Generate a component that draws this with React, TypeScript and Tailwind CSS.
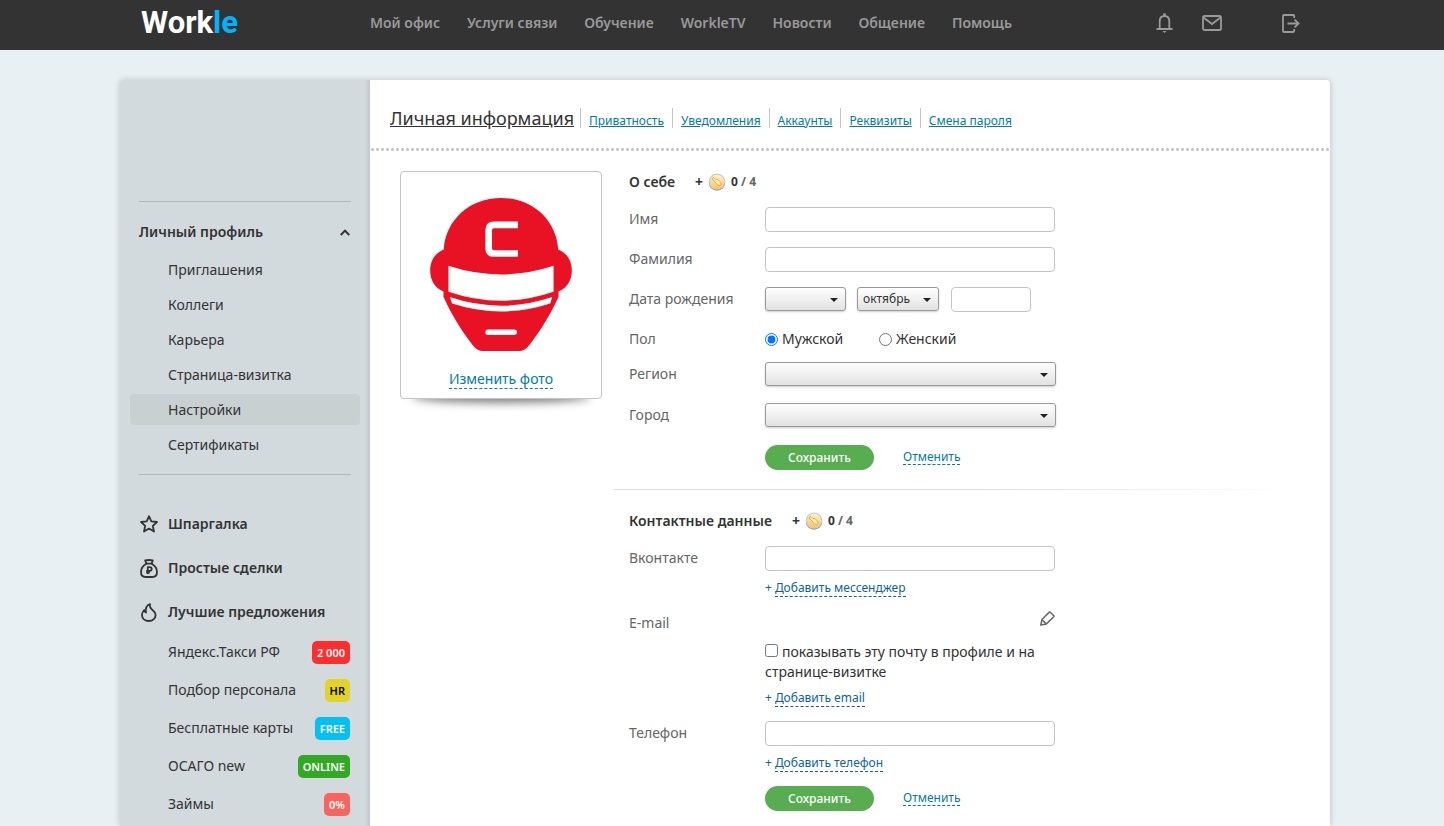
import { useState } from "react";
import type { ReactNode } from "react";
import { clsx } from "clsx";

const NAV_ITEMS = ["Мой офис", "Услуги связи", "Обучение", "WorkleTV", "Новости", "Общение", "Помощь"];

const PROFILE_ITEMS = ["Приглашения", "Коллеги", "Карьера", "Страница-визитка", "Настройки", "Сертификаты"];

const OFFERS = [
  { label: "Яндекс.Такси РФ", badge: "2 000", badgeClass: "bg-[#ff2d2d] text-white" },
  { label: "Подбор персонала", badge: "HR", badgeClass: "bg-[#e1d424] text-black" },
  { label: "Бесплатные карты", badge: "FREE", badgeClass: "bg-[#04c1f2] text-white" },
  { label: "ОСАГО new", badge: "ONLINE", badgeClass: "bg-[#31a922] text-white" },
  { label: "Займы", badge: "0%", badgeClass: "bg-[#f9655d] text-white" },
];

const TABS = ["Приватность", "Уведомления", "Аккаунты", "Реквизиты", "Смена пароля"];

const MONTHS = [
  "январь", "февраль", "март", "апрель", "май", "июнь",
  "июль", "август", "сентябрь", "октябрь", "ноябрь", "декабрь",
];

function BellIcon() {
  return (
    <svg width="17" height="20" viewBox="0 0 17 20" fill="none" stroke="currentColor" strokeWidth="1.8">
      <path d="M.5 16H16.5M3.7 16V8.5C3.7 5 5.7 3 8.5 3S13.3 5 13.3 8.5V16" />
      <path d="M8.5 .3V3" strokeWidth="2.6" />
      <path d="M6.5 18H10.5L8.5 20Z" fill="currentColor" stroke="none" />
    </svg>
  );
}

function MailIcon() {
  return (
    <svg width="20" height="16" viewBox="0 0 20 16" fill="none" stroke="currentColor" strokeWidth="1.8">
      <rect x="1" y="1" width="18" height="14" rx="1.6" />
      <path d="M1.5 2.5 10 9 18.5 2.5" />
    </svg>
  );
}

function LogoutIcon() {
  return (
    <svg width="18" height="19" viewBox="0 0 18 19" fill="none" stroke="currentColor" strokeWidth="1.8">
      <path d="M12.2 4V1.9Q12.2 1 11.3 1H2Q1 1 1 2V17Q1 18 2 18H11.3Q12.2 18 12.2 17.1V15" />
      <path d="M5.5 9.5H16.5M12.6 5.6 16.6 9.5 12.6 13.4" />
    </svg>
  );
}

function StarIcon() {
  return (
    <svg width="18" height="18" viewBox="0 0 18 18" fill="none" stroke="currentColor" strokeWidth="1.8" strokeLinejoin="round">
      <path d="M9 1.2 11.3 6.4 17 7 12.8 10.8 14 16.6 9 13.6 4 16.6 5.2 10.8 1 7 6.7 6.4Z" />
    </svg>
  );
}

function MoneyBagIcon() {
  return (
    <svg width="18" height="19" viewBox="0 0 18 19" fill="none" stroke="currentColor" strokeWidth="1.8" strokeLinejoin="round">
      <path d="M5.2 1.4Q9 .6 12.8 1.4L11.6 4.6H6.4Z" />
      <path d="M6.4 4.8C3.4 6.4 1 9.4 1 13 1 16.3 3 18 5.6 18H12.4C15 18 17 16.3 17 13 17 9.4 14.6 6.4 11.6 4.8" />
      <path d="M7.8 15V8.2H9.8A1.8 1.8 0 0 1 9.8 11.9H6.2M6.2 13.6H9.8" />
    </svg>
  );
}

function FlameIcon() {
  return (
    <svg width="16" height="19" viewBox="0 0 16 19" fill="none" stroke="currentColor" strokeWidth="1.8" strokeLinejoin="round">
      <path d="M9 1C6 2 4.4 5 5 9.5 4 9 3.2 8 3.2 7 1.8 8.5 1 10 1 12 1 15.6 4 18 7.8 18S14.600 15.5 14.6 12C14.6 10 13.6 8.600 11.8 7.2 9.6 5.400 8.200 3.800 9 1Z" />
    </svg>
  );
}

function PencilIcon() {
  return (
    <svg width="15" height="15" viewBox="0 0 15 15" fill="none" stroke="currentColor" strokeWidth="1.5" strokeLinejoin="round">
      <path d="M.8 14 2 8.5 9.3 1.1Q9.8 .7 10.3 1.2L13.8 4.7Q14.2 5.2 13.8 5.7L6.4 12.9Z" />
      <path d="M2 8.8 6.2 12.9" />
    </svg>
  );
}

function CoinIcon() {
  return (
    <svg width="18" height="18" viewBox="0 0 18 18" fill="none">
      <defs>
        <linearGradient id="coin" x1="0" y1="0" x2="0" y2="1">
          <stop offset="0" stopColor="#fff3d0" />
          <stop offset="1" stopColor="#fcc551" />
        </linearGradient>
      </defs>
      <circle cx="9" cy="9.5" r="8.2" fill="#8b8f96" />
      <circle cx="9" cy="8.6" r="8.2" fill="#c9cdd4" />
      <circle cx="9" cy="8.8" r="7" fill="url(#coin)" />
      <path
        d="M4 6.2Q4.2 4.6 6 4.6L8 6.6 9.8 6.6 12.6 9.2 13.2 11.4 11.6 12.6 9.6 11.8 7.6 10.2 6.8 8.6Z"
        fill="#ffeebd"
        stroke="#d79a2c"
        strokeWidth=".8"
      />
    </svg>
  );
}

function Helmet() {
  return (
    <svg width="142" height="153" viewBox="120 113 426 460" aria-hidden="true">
      <path
        fill="#e81224"
        d="M161 268C166 180 238 113 333 113S500 180 505 268C531 278 546 302 546 331S531 385 506 394V410C484 460 450 515 419 554Q405 573 387 573H279Q261 573 247 554C216 515 182 460 160 410V394C135 385 120 360 120 331S135 278 161 268Z"
      />
      <path fill="#fff" d="M175 317Q333 369 491 317V395Q333 449 175 395Z" />
      <path fill="#fff" d="M179 411Q333 463 487 411L481 430Q333 478 186 430Z" />
      <path d="M384 194H312Q296 194 296 210V264Q296 280 312 280H384" fill="none" stroke="#fff" strokeWidth="20" />
      <rect x="286" y="508" width="95" height="17" rx="8" fill="#fff" />
    </svg>
  );
}

function Header() {
  return (
    <header className="h-[50px] bg-[#333] pl-1.5">
      <div className="mx-auto flex h-full max-w-[1210px] items-center pr-[30px] pb-1 pl-[21px] text-[#999]">
        <a href="#" className="w-[229px] font-[Roboto,sans-serif] text-[31px] leading-9 font-bold text-white">
          Work<span className="text-[#00b3ff]">le</span>
        </a>
        <nav className="flex w-[642px] justify-between text-sm leading-5 font-semibold">
          {NAV_ITEMS.map((item) => (
            <a key={item} href="#" className="whitespace-nowrap">{item}</a>
          ))}
        </nav>
        <div className="ml-auto flex items-center">
          <button type="button" aria-label="Уведомления" className="mr-[29px]"><BellIcon /></button>
          <button type="button" aria-label="Сообщения" className="mr-[60px]"><MailIcon /></button>
          <button type="button" aria-label="Выйти"><LogoutIcon /></button>
        </div>
      </div>
    </header>
  );
}

function Sidebar() {
  const [open, setOpen] = useState(true);

  return (
    <aside className="w-[250px] shrink-0 rounded-tl bg-linear-to-r from-[#d3dade] from-98% to-[#bfc6ca] pt-[121px] text-[#333]">
      <div className="mx-[19px] border-t border-[#b0b8bc]" />
      <button
        type="button"
        aria-expanded={open}
        onClick={() => setOpen(!open)}
        className="mt-2.5 flex h-10 w-full items-center justify-between pr-5 pl-[19px] text-sm font-semibold"
      >
        Личный профиль
        <svg width="10" height="7" viewBox="0 0 10 7" fill="none" stroke="currentColor" strokeWidth="2" className={clsx(!open && "rotate-180")}>
          <path d="M.8 6 5 1.6 9.2 6" />
        </svg>
      </button>
      {open && (
        <ul className="px-2.5 text-sm">
          {PROFILE_ITEMS.map((item) => (
            <li key={item} className="py-0.5">
              <a
                href="#"
                className={clsx("flex h-[31px] items-center rounded-sm pl-[38px]", item === "Настройки" && "bg-[#c9d0d2]")}
              >
                {item}
              </a>
            </li>
          ))}
        </ul>
      )}
      <div className="mx-[19px] mt-3 border-t border-[#b0b8bc]" />
      <ul className="mt-[27px] text-sm font-semibold">
        <SidebarLink icon={<StarIcon />}>Шпаргалка</SidebarLink>
        <SidebarLink icon={<MoneyBagIcon />}>Простые сделки</SidebarLink>
        <SidebarLink icon={<FlameIcon />}>Лучшие предложения</SidebarLink>
      </ul>
      <ul className="-mt-px text-sm">
        {OFFERS.map((offer) => (
          <li key={offer.label}>
            <a href="#" className="flex h-[38px] items-center justify-between pr-5 pl-12">
              {offer.label}
              <span className={clsx("rounded-[5px] px-[5px] text-[11px] leading-[23px] font-semibold", offer.badgeClass)}>
                {offer.badge}
              </span>
            </a>
          </li>
        ))}
      </ul>
    </aside>
  );
}

function SidebarLink({ icon, children }: { icon: ReactNode; children: ReactNode }) {
  return (
    <li>
      <a href="#" className="flex h-11 items-center pl-5">
        <span className="flex w-[18px] justify-center">{icon}</span>
        <span className="ml-2.5 whitespace-nowrap">{children}</span>
      </a>
    </li>
  );
}

function Tabs() {
  return (
    <nav className="pt-7">
      <div className="flex h-5 items-center pl-5">
        <a href="#" className="mr-1.5 text-lg leading-5 whitespace-nowrap text-[#333] underline">Личная информация</a>
        {TABS.map((tab) => (
          <a
            key={tab}
            href="#"
            className="mr-2 flex h-5 items-end border-l border-[#c4c4c4] pl-2 text-xs leading-[14px] whitespace-nowrap text-[#007ba7] underline"
          >
            {tab}
          </a>
        ))}
      </div>
      <div className="mt-5 h-[3px] bg-[radial-gradient(circle,#c4c4c4_1px,transparent_2px)] bg-[length:5px_3px]" />
    </nav>
  );
}

function PhotoCard() {
  return (
    <div className="relative w-[202px] shrink-0 self-start">
      <div className="absolute inset-x-3 bottom-0 h-3 rounded-[50%] bg-black/40 shadow-[0_4px_8px_rgba(0,0,0,0.5)]" />
      <div className="relative flex h-[228px] flex-col items-center rounded border border-[#c4c4c4] bg-white pt-[26px]">
        <Helmet />
        <a href="#" className="mt-[19px] border-b border-dashed border-[#007ba7] text-sm leading-[18px] text-[#007ba7]">
          Изменить фото
        </a>
      </div>
    </div>
  );
}

function SectionTitle({ children }: { children: ReactNode }) {
  return (
    <div className="flex h-[22px] items-center text-[#333]">
      <h2 className="mr-5 text-sm font-semibold">{children}</h2>
      <span className="text-sm font-bold">+</span>
      <span className="mx-[5px]"><CoinIcon /></span>
      <span className="text-xs font-bold">0 <span className="text-[#666]">/ 4</span></span>
    </div>
  );
}

function Row({ label, htmlFor, className, children }: { label: string; htmlFor?: string; className: string; children: ReactNode }) {
  return (
    <div className={clsx("flex items-start", className)}>
      <label htmlFor={htmlFor} className="w-[136px] shrink-0 text-sm leading-6 text-[#666]">{label}</label>
      {children}
    </div>
  );
}

function TextInput({ id, label, className }: { id: string; label?: string; className: string }) {
  return (
    <input
      id={id}
      type="text"
      aria-label={label}
      className={clsx("h-[25px] rounded border border-[#c4c4c4] bg-white px-2 text-sm text-[#333]", className)}
    />
  );
}

function Select({ id, label, options, value, className }: { id: string; label?: string; options: string[]; value: string; className: string }) {
  return (
    <span className={clsx("relative block", className)}>
      <select
        id={id}
        aria-label={label}
        defaultValue={value}
        className="block h-6 w-full appearance-none rounded-[3px] border border-[#999] bg-linear-to-b from-white to-[#e2e2e2] pr-5 pl-[5px] text-xs text-[#333] shadow-[0_1px_2px_rgba(0,0,0,0.2)]"
      >
        {options.map((option) => (
          <option key={option}>{option}</option>
        ))}
      </select>
      <svg width="8" height="4" viewBox="0 0 8 4" className="pointer-events-none absolute top-[11px] right-2 fill-[#222]">
        <path d="M0 0H8L4 4Z" />
      </svg>
    </span>
  );
}

function FormActions({ className }: { className: string }) {
  return (
    <div className={clsx("flex items-center pl-[136px]", className)}>
      <button type="submit" className="h-[25px] w-[109px] rounded-full bg-[#57ad50] text-xs font-medium text-white">
        Сохранить
      </button>
      <button type="reset" className="ml-[29px] border-b border-dashed border-[#007ba7] text-xs leading-[14px] text-[#007ba7]">
        Отменить
      </button>
    </div>
  );
}

function AddLink({ children, className }: { children: ReactNode; className: string }) {
  return (
    <div className={clsx("ml-[136px] flex text-xs leading-4 text-[#0b62a8]", className)}>
      <span className="mr-[3px]">+</span>
      <button type="button" className="border-b border-dashed border-[#0b62a8]">{children}</button>
    </div>
  );
}

function AboutForm() {
  return (
    <form onSubmit={(e) => e.preventDefault()}>
      <SectionTitle>О себе</SectionTitle>
      <Row label="Имя" htmlFor="first-name" className="mt-[14px]">
        <TextInput id="first-name" className="w-[290px]" />
      </Row>
      <Row label="Фамилия" htmlFor="last-name" className="mt-[15px]">
        <TextInput id="last-name" className="w-[290px]" />
      </Row>
      <Row label="Дата рождения" htmlFor="birth-day" className="mt-[15px]">
        <Select id="birth-day" options={[""]} value="" className="w-[81px]" />
        <Select id="birth-month" label="Месяц" options={MONTHS} value="октябрь" className="ml-[11px] w-[82px]" />
        <TextInput id="birth-year" label="Год" className="ml-3 w-20" />
      </Row>
      <Row label="Пол" className="mt-[15px]">
        <label className="flex w-[114px] items-center text-sm leading-6 text-[#333]">
          <input type="radio" name="gender" defaultChecked className="mr-1 size-[13px]" />
          Мужской
        </label>
        <label className="flex items-center text-sm leading-6 text-[#333]">
          <input type="radio" name="gender" className="mr-1 size-[13px]" />
          Женский
        </label>
      </Row>
      <Row label="Регион" htmlFor="region" className="mt-[11px]">
        <Select id="region" options={[""]} value="" className="w-[291px]" />
      </Row>
      <Row label="Город" htmlFor="city" className="mt-[17px]">
        <Select id="city" options={[""]} value="" className="w-[291px]" />
      </Row>
      <FormActions className="mt-[18px]" />
    </form>
  );
}

function ContactsForm() {
  return (
    <form onSubmit={(e) => e.preventDefault()}>
      <SectionTitle>Контактные данные</SectionTitle>
      <Row label="Вконтакте" htmlFor="vk" className="mt-[14px]">
        <TextInput id="vk" className="w-[290px]" />
      </Row>
      <AddLink className="mt-[9px]">Добавить мессенджер</AddLink>
      <Row label="E-mail" className="mt-[14px]">
        <button type="button" aria-label="Изменить e-mail" className="ml-[275px] text-[#666]"><PencilIcon /></button>
      </Row>
      <label className="mt-[7px] ml-[136px] block w-[290px] text-sm leading-5 text-[#333]">
        <input type="checkbox" className="mr-1 size-[13px]" />
        показывать эту почту в профиле и на странице-визитке
      </label>
      <AddLink className="mt-2">Добавить email</AddLink>
      <Row label="Телефон" htmlFor="phone" className="mt-[14px]">
        <TextInput id="phone" className="w-[290px]" />
      </Row>
      <AddLink className="mt-[9px]">Добавить телефон</AddLink>
      <FormActions className="mt-[14px]" />
    </form>
  );
}

export default function App() {
  return (
    <div className="flex min-h-screen flex-col bg-[#e8f0f3] font-['Noto_Sans',sans-serif]">
      <Header />
      <div className="flex grow pt-[30px] pl-1.5">
        <div className="mx-auto flex w-full max-w-[1210px] rounded-t shadow-[0_0_6px_rgba(0,0,0,0.2)]">
          <Sidebar />
          <main className="min-w-0 grow rounded-tr bg-white pb-[15px]">
            <Tabs />
            <div className="flex pt-5 pl-[30px]">
              <PhotoCard />
              <div className="grow pl-[27px]">
                <AboutForm />
                <div className="mt-[19px] mb-5 -ml-4 h-px bg-linear-to-r from-[#ddd] from-50% to-transparent to-95%" />
                <ContactsForm />
              </div>
            </div>
          </main>
        </div>
      </div>
    </div>
  );
}
